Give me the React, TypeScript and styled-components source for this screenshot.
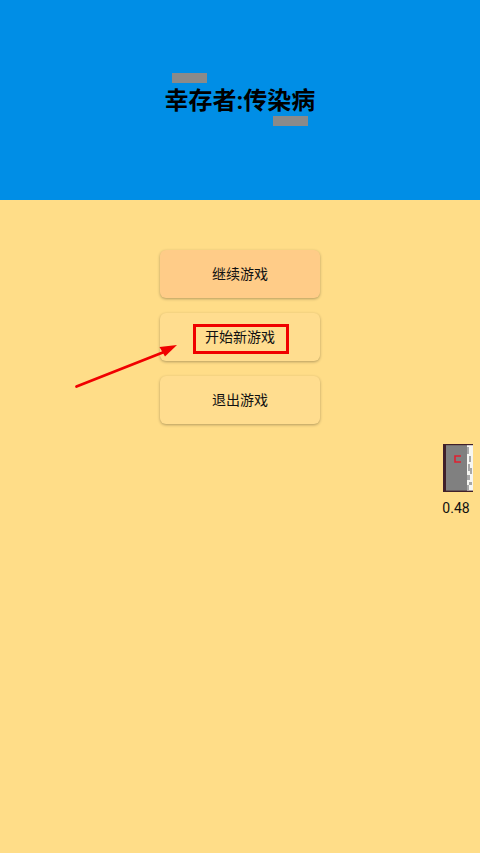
import React from "react";
import styled, { createGlobalStyle } from "styled-components";

const GlobalStyle = createGlobalStyle`
  html, body {
    margin: 0;
    padding: 0;
    height: 100%;
    background: #ffdd88;
  }
  #root {
    height: 100%;
  }
`;

const Page = styled.div`
  position: relative;
  width: 480px;
  height: 853px;
  overflow: hidden;
  background: #ffdd88;
  font-family: Roboto, "Noto Sans CJK SC", sans-serif;
  color: #000;
`;

const Header = styled.header`
  position: relative;
  height: 200px;
  display: flex;
  align-items: center;
  justify-content: center;
  background: #008ee6;
`;

const Title = styled.h1`
  margin: 2px 0 0;
  font-size: 24px;
  line-height: 32px;
  font-weight: 700;
`;

const Smudge = styled.div<{ $left: number; $top: number }>`
  position: absolute;
  left: ${(p) => p.$left}px;
  top: ${(p) => p.$top}px;
  width: 35px;
  height: 10px;
  background: #8a8a8a;
`;

const Menu = styled.nav`
  display: flex;
  flex-direction: column;
  align-items: center;
  gap: 15px;
  padding-top: 50px;
`;

const MenuButton = styled.button<{ $active?: boolean }>`
  width: 160px;
  height: 48px;
  padding: 0 0 2px;
  border: 0;
  border-radius: 6px;
  background: ${(p) => (p.$active ? "#ffcc88" : "#ffdd8f")};
  box-shadow: 0 1px 3px rgba(0, 0, 0, 0.3);
  font-family: inherit;
  font-size: 14px;
  color: #111;
`;

const Highlight = styled.div`
  position: absolute;
  left: 193px;
  top: 324px;
  width: 96px;
  height: 30px;
  box-sizing: border-box;
  border: 3px solid #f00000;
`;

const Arrow = styled.svg`
  position: absolute;
  left: 70px;
  top: 340px;
`;

const DebugPanel = styled.div`
  position: absolute;
  left: 436px;
  top: 444px;
  width: 44px;
  display: flex;
  flex-direction: column;
  align-items: center;
  gap: 8px;
`;

const Preview = styled.svg`
  display: block;
`;

const DebugValue = styled.span`
  font-size: 14px;
  line-height: 16px;
  margin-right: 4px;
  color: #111;
`;

export default function App() {
  return (
    <Page>
      <GlobalStyle />
      <Header>
        <Title>幸存者:传染病</Title>
        <Smudge $left={172} $top={73} />
        <Smudge $left={273} $top={116} />
      </Header>
      <Menu>
        <MenuButton $active>继续游戏</MenuButton>
        <MenuButton>开始新游戏</MenuButton>
        <MenuButton>退出游戏</MenuButton>
      </Menu>
      <Highlight />
      <Arrow width="115" height="55" viewBox="0 0 115 55">
        <line x1="6.5" y1="46.5" x2="94" y2="12" stroke="#f00000" strokeWidth="2.8" strokeLinecap="round" />
        <polygon points="107,5 89.5,7 95,16.5" fill="#f00000" />
      </Arrow>
      <DebugPanel>
        <Preview width="30" height="48" viewBox="0 0 30 48">
          <rect x="0" y="0" width="30" height="48" fill="#808080" />
          <rect x="24" y="1" width="6" height="46" fill="#f6f6f2" />
          <path d="M24 3h2v7h-2zM26 12h2v6h-2zM25 20h2v7h-2zM27 24h2v6h-2zM24 31h3v5h-3zM26 38h3v3h-3zM24 41h2v5h-2z" fill="#a8a8a8" />
          <rect x="0" y="0" width="30" height="1.2" fill="#40202a" />
          <rect x="0" y="46.6" width="30" height="1.4" fill="#40202a" />
          <rect x="0" y="0" width="3" height="48" fill="#40202a" />
          <path d="M18 12h-6v6h6" fill="none" stroke="#e02030" strokeWidth="1.6" />
        </Preview>
        <DebugValue>0.48</DebugValue>
      </DebugPanel>
    </Page>
  );
}
